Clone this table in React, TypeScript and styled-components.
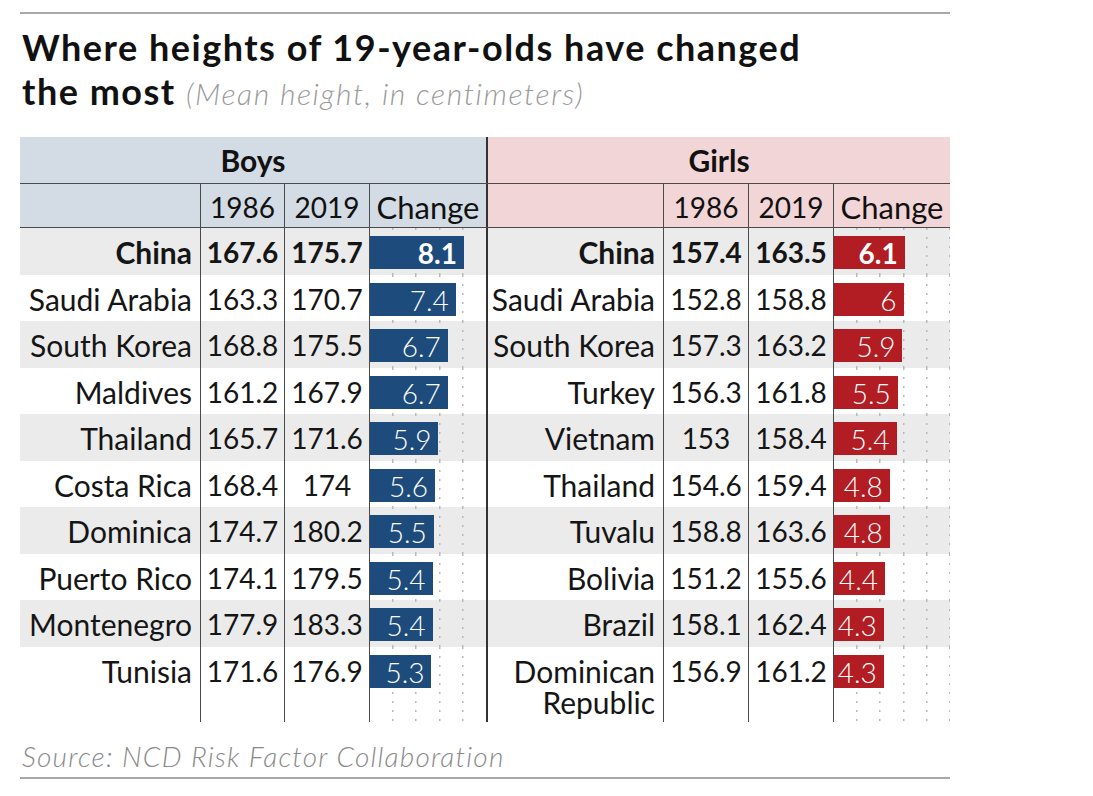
import React from 'react';
import styled, { createGlobalStyle, css } from 'styled-components';

type Row = [string, string, string, number];

const boys: Row[] = [
	['China', '167.6', '175.7', 8.1],
	['Saudi Arabia', '163.3', '170.7', 7.4],
	['South Korea', '168.8', '175.5', 6.7],
	['Maldives', '161.2', '167.9', 6.7],
	['Thailand', '165.7', '171.6', 5.9],
	['Costa Rica', '168.4', '174', 5.6],
	['Dominica', '174.7', '180.2', 5.5],
	['Puerto Rico', '174.1', '179.5', 5.4],
	['Montenegro', '177.9', '183.3', 5.4],
	['Tunisia', '171.6', '176.9', 5.3],
];

const girls: Row[] = [
	['China', '157.4', '163.5', 6.1],
	['Saudi Arabia', '152.8', '158.8', 6],
	['South Korea', '157.3', '163.2', 5.9],
	['Turkey', '156.3', '161.8', 5.5],
	['Vietnam', '153', '158.4', 5.4],
	['Thailand', '154.6', '159.4', 4.8],
	['Tuvalu', '158.8', '163.6', 4.8],
	['Bolivia', '151.2', '155.6', 4.4],
	['Brazil', '158.1', '162.4', 4.3],
	['Dominican Republic', '156.9', '161.2', 4.3],
];

const UNIT = 11.6;
const BLUE = '#1d4b7c';
const RED = '#b11d23';
const LINE = '#4a4a4a';
const BOYS_BG = '#d3dbe4';
const GIRLS_BG = '#f1d5d7';

type Line = 'none' | 'thin' | 'divider';

const GlobalStyle = createGlobalStyle`
	body {
		margin: 0;
		background: #fff;
		font-family: Lato, 'Open Sans', sans-serif;
		color: #111;
	}
`;

const Page = styled.div`
	width: 930px;
	margin-left: 20px;
	padding-top: 12px;
`;

const Rule = styled.div`
	height: 0;
	border-top: 2px solid #a8a8a8;
`;

const Title = styled.h1`
	margin: 11px 0 0 2px;
	font-size: 36px;
	letter-spacing: 1.5px;
	line-height: 44px;
	font-weight: 700;
	color: #111;
`;

const Subtitle = styled.span`
	font-size: 30px;
	letter-spacing: 1.6px;
	font-weight: 300;
	font-style: italic;
	color: #9a9a9a;
`;

const Table = styled.div`
	margin-top: 22px;
	display: flex;
	flex-direction: column;
`;

const GridRow = styled.div<{ $bg?: string; $height?: number; $bottom?: boolean }>`
	display: grid;
	grid-template-columns: 180px 84px 85px 117px 177px 85px 85px 117px;
	background: ${(p) => p.$bg ?? '#fff'};
	min-height: ${(p) => p.$height ?? 46.5}px;
	${(p) =>
		p.$bottom &&
		css`
			border-bottom: 1.5px solid ${LINE};
		`}
`;

const lineStyle = (line: Line) => {
	if (line === 'divider') return `border-left: 2px solid #333;`;
	if (line === 'thin') return `border-left: 1.5px solid ${LINE};`;
	return '';
};

const GroupHead = styled.div<{ $bg: string; $line: Line }>`
	grid-column: span 4;
	background: ${(p) => p.$bg};
	${(p) => lineStyle(p.$line)}
	display: flex;
	align-items: center;
	justify-content: center;
	font-size: 30px;
	font-weight: 700;
`;

const HeadCell = styled.div<{ $bg: string; $line: Line; $word?: boolean }>`
	background: ${(p) => p.$bg};
	${(p) => lineStyle(p.$line)}
	display: flex;
	align-items: center;
	justify-content: center;
	font-size: ${(p) => (p.$word ? 31 : 28)}px;
	font-weight: 400;
	padding-top: 2px;
	white-space: nowrap;
`;

const Cell = styled.div<{ $line: Line; $bold?: boolean; $name?: boolean }>`
	${(p) => lineStyle(p.$line)}
	padding: 9px ${(p) => (p.$name ? '8px' : '0')} 4px 0;
	text-align: ${(p) => (p.$name ? 'right' : 'center')};
	font-size: ${(p) => (p.$name ? 30 : 28)}px;
	line-height: 31px;
	font-weight: ${(p) => (p.$bold ? 700 : 400)};
	color: #151515;
	white-space: ${(p) => (p.$name ? 'normal' : 'nowrap')};
`;

const dots = (count: number) => {
	const xs = Array.from({ length: count }, (_, i) => Math.round((i + 1) * 2 * UNIT) - 1);
	return css`
		background-image: ${xs
			.map(() => 'repeating-linear-gradient(to bottom, #b9b9b9 0 2px, transparent 2px 9px)')
			.join(', ')};
		background-size: 1.5px 100%;
		background-repeat: no-repeat;
		background-position: ${xs.map((x) => `${x}px 0`).join(', ')};
	`;
};

const ChangeCell = styled.div<{ $line: Line; $dots: number }>`
	${(p) => lineStyle(p.$line)}
	${(p) => dots(p.$dots)}
	padding-top: 8px;
`;

const Bar = styled.div<{ $color: string; $bold?: boolean }>`
	height: 33px;
	background: ${(p) => p.$color};
	color: #fff;
	font-size: 28px;
	line-height: 34px;
	font-weight: ${(p) => (p.$bold ? 700 : 300)};
	text-align: right;
	padding-right: 7px;
	box-sizing: border-box;
	white-space: nowrap;
`;

const Source = styled.p`
	margin: 18px 0 5px 2px;
	font-size: 28px;
	letter-spacing: 1.2px;
	line-height: 32px;
	font-style: italic;
	font-weight: 300;
	color: #8a8a8a;
`;

type HalfProps = { row: Row; color: string; bold: boolean; first: Line; dotsCount: number };

const Half = ({ row, color, bold, first, dotsCount }: HalfProps) => (
	<>
		<Cell $line={first} $name $bold={bold}>
			{row[0]}
		</Cell>
		<Cell $line="thin" $bold={bold}>
			{row[1]}
		</Cell>
		<Cell $line="thin" $bold={bold}>
			{row[2]}
		</Cell>
		<ChangeCell $line="thin" $dots={dotsCount}>
			<Bar $color={color} $bold={bold} style={{ width: row[3] * UNIT }}>
				{row[3]}
			</Bar>
		</ChangeCell>
	</>
);

export default function App() {
	return (
		<Page>
			<GlobalStyle />
			<Rule />
			<Title>
				Where heights of 19-year-olds have changed
				<br />
				the most <Subtitle>(Mean height, in centimeters)</Subtitle>
			</Title>
			<Table>
				<GridRow $height={46} $bottom>
					<GroupHead $bg={BOYS_BG} $line="none">
						Boys
					</GroupHead>
					<GroupHead $bg={GIRLS_BG} $line="divider">
						Girls
					</GroupHead>
				</GridRow>
				<GridRow $height={43} $bottom>
					<HeadCell $bg={BOYS_BG} $line="none" />
					<HeadCell $bg={BOYS_BG} $line="thin">1986</HeadCell>
					<HeadCell $bg={BOYS_BG} $line="thin">2019</HeadCell>
					<HeadCell $bg={BOYS_BG} $line="thin" $word>
						Change
					</HeadCell>
					<HeadCell $bg={GIRLS_BG} $line="divider" />
					<HeadCell $bg={GIRLS_BG} $line="thin">1986</HeadCell>
					<HeadCell $bg={GIRLS_BG} $line="thin">2019</HeadCell>
					<HeadCell $bg={GIRLS_BG} $line="thin" $word>
						Change
					</HeadCell>
				</GridRow>
				{boys.map((b, i) => (
					<GridRow key={b[0]} $bg={i % 2 === 0 ? '#ebebeb' : '#fff'}>
						<Half row={b} color={BLUE} bold={i === 0} first="none" dotsCount={4} />
						<Half row={girls[i]} color={RED} bold={i === 0} first="divider" dotsCount={5} />
					</GridRow>
				))}
			</Table>
			<Source>Source: NCD Risk Factor Collaboration</Source>
			<Rule />
		</Page>
	);
}
